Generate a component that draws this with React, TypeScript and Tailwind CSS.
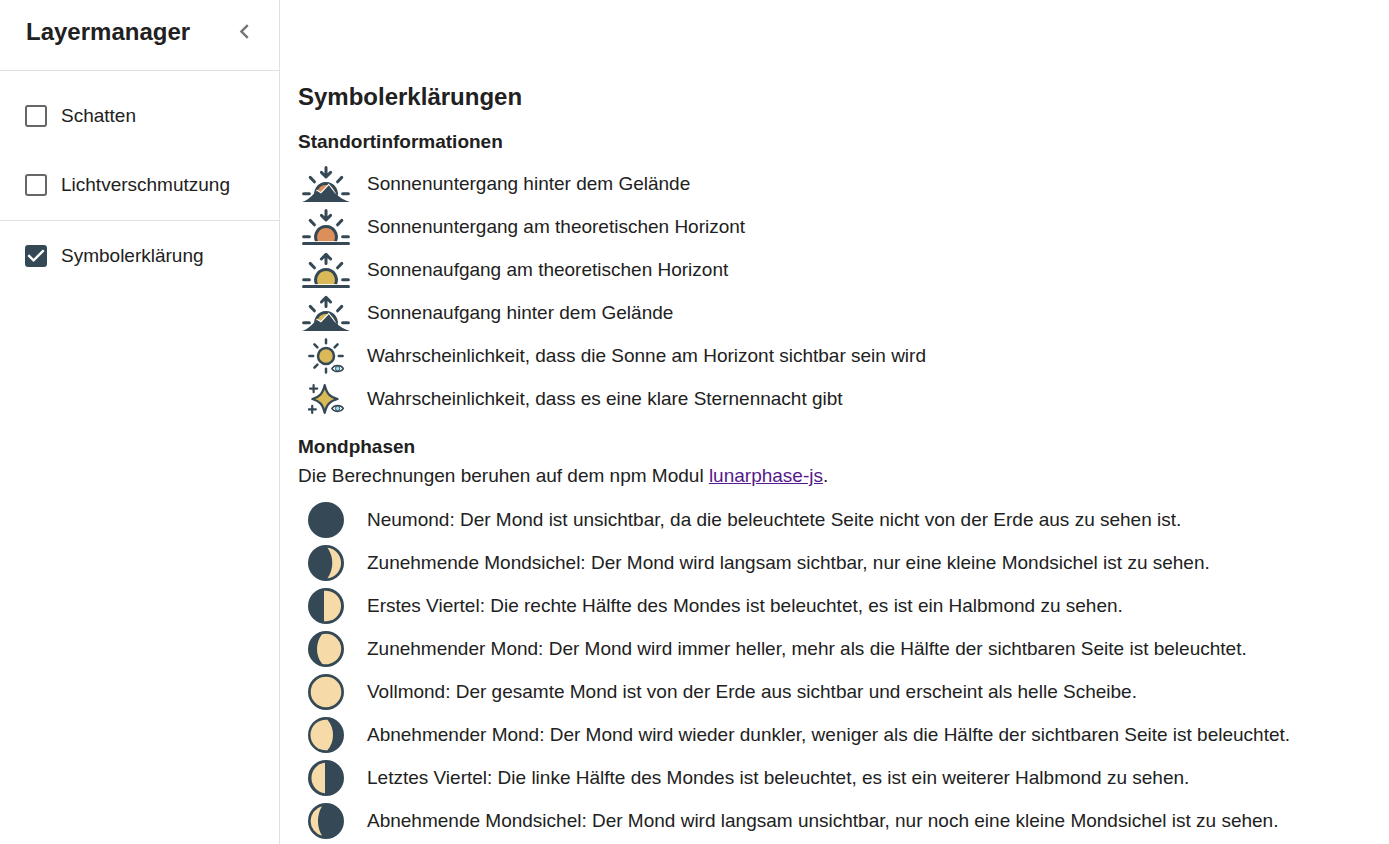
import { useState, type ReactNode } from "react";

const DARK = "#344955";
const MOON = "#f6dba9";
const DUSK = "#dd8f5b";
const DAWN = "#dab958";

function HorizonIcon({ rising, terrain }: { rising: boolean; terrain: boolean }) {
  return (
    <svg width="48" height="36" viewBox="0 0 48 36" fill="none" aria-hidden="true">
      <g stroke={DARK} strokeWidth="3" strokeLinecap="round">
        <path d="M8.2 11.4 12.4 15.8M39.8 11.4 35.6 15.8M1.6 27.7H7.4M40.6 27.7H46.4" />
        <path
          strokeLinejoin="round"
          d={rising ? "M24 11.4V2.4M19.4 7 24 2.4 28.6 7" : "M24 1.6V10.6M19.4 6.4 24 11 28.6 6.4"}
        />
      </g>
      <path
        d="M14.4 32.4A10.5 10.5 0 1 1 33.6 32.4Z"
        fill={rising ? DAWN : DUSK}
      />
      <path d="M14.6 32.4A10.4 10.4 0 1 1 33.4 32.4" stroke={DARK} strokeWidth="3" />
      {terrain ? (
        <>
          <path d="M10 36 14.8 23.4 18.8 26 26.8 17.6 33.4 26.4 38 36Z" fill="#fff" />
          <path d="M0 36C6 34.4 10.2 29.6 14.8 24.8L19 27.6 26.8 19.2 32.4 26.6C37 31 42.4 34.8 48 36Z" fill={DARK} />
        </>
      ) : (
        <>
          <path d="M11 32.6H37" stroke="#fff" strokeWidth=".8" />
          <path d="M1.5 34.5H46.5" stroke={DARK} strokeWidth="3" strokeLinecap="round" />
        </>
      )}
    </svg>
  );
}

function Eye({ y }: { y: number }) {
  return (
    <>
      <path
        d={`M23.8 ${y}C26.4 ${y - 4} 32.8 ${y - 4} 35.4 ${y}C32.8 ${y + 4} 26.4 ${y + 4} 23.8 ${y}Z`}
        fill="#fff"
        stroke={DARK}
        strokeWidth="1.5"
        strokeLinejoin="round"
      />
      <circle cx="29.6" cy={y} r="2.2" fill="#9fdcf0" stroke={DARK} strokeWidth=".9" />
    </>
  );
}

function SunChanceIcon() {
  return (
    <svg width="36" height="36" viewBox="0 0 36 36" fill="none" aria-hidden="true">
      <circle cx="18" cy="18" r="8" fill={DAWN} stroke={DARK} strokeWidth="2.5" />
      <path
        d="M18 1.4V5.2M18 30.8V34.6M1.4 18H5.2M30.8 18H34.6M6.4 6.4 9.4 9.4M29.6 6.4 26.6 9.4M6.4 29.6 9.4 26.6"
        stroke={DARK}
        strokeWidth="2.5"
        strokeLinecap="round"
      />
      <Eye y={30.6} />
    </svg>
  );
}

function StarChanceIcon() {
  return (
    <svg width="36" height="36" viewBox="0 0 36 36" fill="none" aria-hidden="true">
      <path
        d="M16.7 4.2C18.8 12.6 21.6 15.8 29.6 18C21.6 20.2 18.8 23.4 16.7 31.8C14.6 23.4 11.8 20.2 4.4 18C11.8 15.8 14.6 12.6 16.7 4.2Z"
        fill={DAWN}
        stroke={DARK}
        strokeWidth="2.3"
        strokeLinejoin="round"
      />
      <path d="M5.6 4V11.2M2 7.6H9.2M4.2 24.8V32M.6 28.4H7.8" stroke={DARK} strokeWidth="2.2" strokeLinecap="round" />
      <Eye y={27.4} />
    </svg>
  );
}

function MoonIcon({ lit }: { lit?: string }) {
  return (
    <svg width="36" height="36" viewBox="0 0 36 36" aria-hidden="true">
      <circle cx="18" cy="18" r="18" fill={DARK} />
      {lit && <path d={lit} fill={MOON} />}
    </svg>
  );
}

const siteSymbols: { icon: ReactNode; text: string }[] = [
  { icon: <HorizonIcon rising={false} terrain />, text: "Sonnenuntergang hinter dem Gelände" },
  { icon: <HorizonIcon rising={false} terrain={false} />, text: "Sonnenuntergang am theoretischen Horizont" },
  { icon: <HorizonIcon rising terrain={false} />, text: "Sonnenaufgang am theoretischen Horizont" },
  { icon: <HorizonIcon rising terrain />, text: "Sonnenaufgang hinter dem Gelände" },
  { icon: <SunChanceIcon />, text: "Wahrscheinlichkeit, dass die Sonne am Horizont sichtbar sein wird" },
  { icon: <StarChanceIcon />, text: "Wahrscheinlichkeit, dass es eine klare Sternennacht gibt" },
];

const moonSymbols: { icon: ReactNode; text: string }[] = [
  { icon: <MoonIcon />, text: "Neumond: Der Mond ist unsichtbar, da die beleuchtete Seite nicht von der Erde aus zu sehen ist." },
  {
    icon: <MoonIcon lit="M19.5 2.8A15.3 15.3 0 0 1 19.5 33.2A26.5 26.5 0 0 0 19.5 2.8Z" />,
    text: "Zunehmende Mondsichel: Der Mond wird langsam sichtbar, nur eine kleine Mondsichel ist zu sehen.",
  },
  {
    icon: <MoonIcon lit="M16 2.8A15.3 15.3 0 1 1 16 33.2Z" />,
    text: "Erstes Viertel: Die rechte Hälfte des Mondes ist beleuchtet, es ist ein Halbmond zu sehen.",
  },
  {
    icon: <MoonIcon lit="M14 3.2A15.3 15.3 0 1 1 14 32.8A24.4 24.4 0 0 1 14 3.2Z" />,
    text: "Zunehmender Mond: Der Mond wird immer heller, mehr als die Hälfte der sichtbaren Seite ist beleuchtet.",
  },
  {
    icon: <MoonIcon lit="M18 2.7A15.3 15.3 0 1 1 18 33.3A15.3 15.3 0 1 1 18 2.7Z" />,
    text: "Vollmond: Der gesamte Mond ist von der Erde aus sichtbar und erscheint als helle Scheibe.",
  },
  {
    icon: <MoonIcon lit="M19.5 2.8A15.3 15.3 0 1 0 19.5 33.2A23.7 23.7 0 0 0 19.5 2.8Z" />,
    text: "Abnehmender Mond: Der Mond wird wieder dunkler, weniger als die Hälfte der sichtbaren Seite ist beleuchtet.",
  },
  {
    icon: <MoonIcon lit="M17 2.8A15.3 15.3 0 0 0 17 33.2Z" />,
    text: "Letztes Viertel: Die linke Hälfte des Mondes ist beleuchtet, es ist ein weiterer Halbmond zu sehen.",
  },
  {
    icon: <MoonIcon lit="M14 3.2A15.3 15.3 0 0 0 14 32.8A29 29 0 0 1 14 3.2Z" />,
    text: "Abnehmende Mondsichel: Der Mond wird langsam unsichtbar, nur noch eine kleine Mondsichel ist zu sehen.",
  },
];

function SymbolList({ items }: { items: { icon: ReactNode; text: string }[] }) {
  return (
    <ul>
      {items.map(({ icon, text }) => (
        <li key={text} className="flex min-h-[43px] items-center gap-[13px]">
          <span className="flex w-14 shrink-0 justify-center">{icon}</span>
          <span>{text}</span>
        </li>
      ))}
    </ul>
  );
}

function LayerToggle({ label, initial = false }: { label: string; initial?: boolean }) {
  const [checked, setChecked] = useState(initial);
  return (
    <label className="flex h-[69px] cursor-pointer items-center gap-[14px] pl-[25px]">
      <span className="grid shrink-0 place-items-center">
        <input
          type="checkbox"
          checked={checked}
          onChange={(e) => setChecked(e.target.checked)}
          className="col-start-1 row-start-1 size-[22px] appearance-none rounded-[3px] border-2 border-[#666666] checked:border-[#344955] checked:bg-[#344955]"
        />
        {checked && (
          <svg className="pointer-events-none col-start-1 row-start-1" width="22" height="22" viewBox="3 3 18 18" aria-hidden="true">
            <path d="M10 17l-5-5 1.41-1.41L10 14.17l7.59-7.59L19 8z" fill="#fff" />
          </svg>
        )}
      </span>
      {label}
    </label>
  );
}

export default function App() {
  return (
    <div className="flex min-h-screen bg-white font-['Liberation_Sans',Arial,sans-serif] text-[19px] leading-[29px] text-[#212121]">
      <aside className="w-[280px] shrink-0 border-r border-[#e0e0e0]">
        <header className="flex h-[71px] items-start justify-between border-b border-[#e0e0e0] pt-[17px] pr-5 pl-[26px]">
          <h2 className="text-[24px] font-bold">Layermanager</h2>
          <button type="button" aria-label="Layermanager einklappen" className="cursor-pointer text-[#757575]">
            <svg width="29" height="29" viewBox="0 0 24 24" fill="currentColor" aria-hidden="true">
              <path d="M15.41 7.41 14 6l-6 6 6 6 1.41-1.41L10.83 12z" />
            </svg>
          </button>
        </header>
        <div className="border-b border-[#e0e0e0] pt-[10px] pb-px">
          <LayerToggle label="Schatten" />
          <LayerToggle label="Lichtverschmutzung" />
        </div>
        <LayerToggle label="Symbolerklärung" initial />
      </aside>
      <main className="min-w-0 flex-1 pt-[82px] pr-4 pl-[18px]">
        <h1 className="mb-4 text-[24px] font-bold">Symbolerklärungen</h1>
        <section className="mb-3">
          <h2 className="mb-1.5 font-bold">Standortinformationen</h2>
          <SymbolList items={siteSymbols} />
        </section>
        <section>
          <h2 className="font-bold">Mondphasen</h2>
          <p className="mb-2">
            Die Berechnungen beruhen auf dem npm Modul{" "}
            <a href="https://www.npmjs.com/package/lunarphase-js" className="text-[#551a8b] underline">
              lunarphase-js
            </a>
            .
          </p>
          <SymbolList items={moonSymbols} />
        </section>
      </main>
    </div>
  );
}
